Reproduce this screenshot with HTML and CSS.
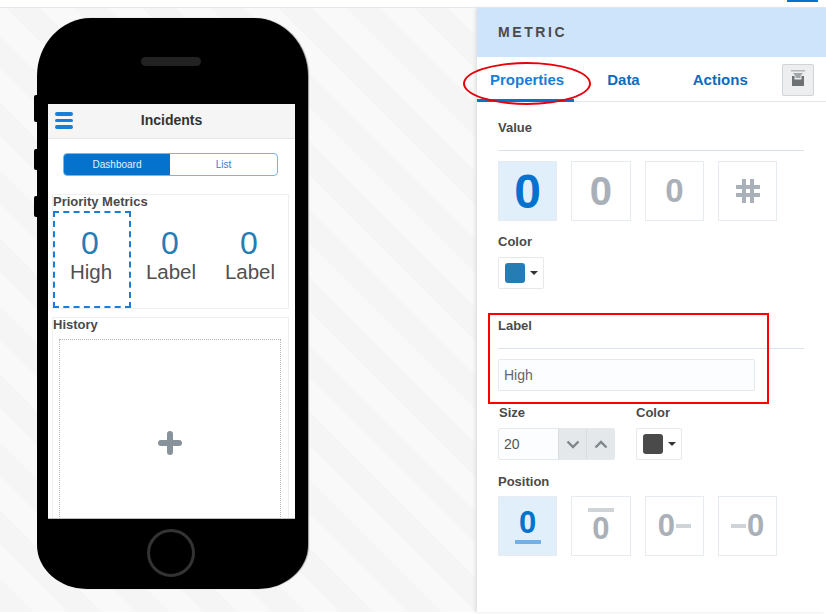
FILE: index.html
```html
<!DOCTYPE html>
<html lang="en">
<head>
    <meta charset="UTF-8">
    <meta name="viewport" content="width=device-width, initial-scale=1.0">
    <title>Metric Properties</title>
    <link rel="stylesheet" href="styles.css">
</head>
<body>
    <header class="topbar">
        <span class="topbar-mark"></span>
    </header>

    <div class="workspace">
        <section class="canvas">
            <div class="phone">
                <span class="side-btn side-btn-1"></span>
                <span class="side-btn side-btn-2"></span>
                <span class="side-btn side-btn-3"></span>
                <div class="speaker"></div>

                <div class="screen">
                    <div class="app-header">
                        <span class="burger"><i></i><i></i><i></i></span>
                        <span class="app-title">Incidents</span>
                    </div>

                    <div class="segmented">
                        <span class="seg seg-on">Dashboard</span>
                        <span class="seg">List</span>
                    </div>

                    <div class="card card-metrics">
                        <h3>Priority Metrics</h3>
                        <div class="metrics">
                            <div class="metric metric-selected"><b>0</b><span>High</span></div>
                            <div class="metric"><b>0</b><span>Label</span></div>
                            <div class="metric"><b>0</b><span>Label</span></div>
                        </div>
                    </div>

                    <div class="card card-history">
                        <h3>History</h3>
                        <div class="dropzone">
                            <svg class="plus" width="24" height="24" viewBox="0 0 24 24">
                                <path d="M12 3v18M3 12h18" stroke="#87929a" stroke-width="6" stroke-linecap="round"/>
                            </svg>
                        </div>
                    </div>
                </div>

                <div class="home-btn"></div>
            </div>
        </section>

        <aside class="panel">
            <div class="panel-head">METRIC</div>

            <nav class="tabs">
                <a class="tab tab-on">Properties</a>
                <a class="tab tab-data">Data</a>
                <a class="tab tab-actions">Actions</a>
                <button class="dock-btn">
                    <svg width="14" height="16" viewBox="0 0 14 16">
                        <path d="M0 0h14v1.500H0z" fill="#b4b7b9"/>
                        <path d="M2 3h10L9.500 6v2h-5V6z" fill="#a2a5a8"/>
                        <path d="M1 6h2.500v3.500h7V6H13v10H1z" fill="#6e7174"/>
                    </svg>
                </button>
            </nav>

            <div class="panel-body">
                <h4 class="section-title">Value</h4>
                <div class="tiles">
                    <div class="tile tile-on"><span class="digit-xl">0</span></div>
                    <div class="tile"><span class="digit-lg">0</span></div>
                    <div class="tile"><span class="digit-md">0</span></div>
                    <div class="tile">
                        <svg width="26" height="26" viewBox="0 0 26 26">
                            <path d="M9 1v24M17 1v24M1 9h24M1 17h24" stroke="#a9b0b8" stroke-width="4"/>
                        </svg>
                    </div>
                </div>

                <div class="field-label field-color">Color</div>
                <div class="swatch-btn"><span class="swatch swatch-blue"></span><span class="caret"></span></div>

                <h4 class="section-title section-label">Label</h4>
                <input class="text-input" type="text" value="High">

                <div class="size-row">
                    <div class="size-col">
                        <div class="field-label">Size</div>
                        <div class="spinner">
                            <span class="spinner-value">20</span>
                            <span class="spinner-btn">
                                <svg width="14" height="9" viewBox="0 0 14 9"><path d="M1.500 1.500 7 7l5.500-5.500" fill="none" stroke="#7d868c" stroke-width="2.400"/></svg>
                            </span>
                            <span class="spinner-btn">
                                <svg width="14" height="9" viewBox="0 0 14 9"><path d="M1.500 7.500 7 2l5.500 5.500" fill="none" stroke="#7d868c" stroke-width="2.400"/></svg>
                            </span>
                        </div>
                    </div>
                    <div class="color-col">
                        <div class="field-label">Color</div>
                        <div class="swatch-btn"><span class="swatch swatch-dark"></span><span class="caret"></span></div>
                    </div>
                </div>

                <div class="field-label field-position">Position</div>
                <div class="tiles">
                    <div class="tile tile-on tile-stack"><span class="digit-pos digit-on">0</span><i class="bar bar-on"></i></div>
                    <div class="tile tile-stack"><i class="bar"></i><span class="digit-pos">0</span></div>
                    <div class="tile tile-side"><span class="digit-pos">0</span><i class="dash"></i></div>
                    <div class="tile tile-side"><i class="dash"></i><span class="digit-pos">0</span></div>
                </div>
            </div>
        </aside>
    </div>

    <div class="mark-ellipse"></div>
    <div class="mark-rect"></div>
</body>
</html>
```

FILE: styles.css
```css
* {
    box-sizing: border-box;
}

body {
    margin: 0;
    width: 826px;
    height: 614px;
    overflow: hidden;
    position: relative;
    background: #fff;
    font-family: 'Liberation Sans', Arial, sans-serif;
    color: #444;
}

.topbar {
    height: 8px;
    border-bottom: 1px solid #e3e8ec;
    position: relative;
}

.topbar-mark {
    position: absolute;
    left: 787px;
    top: 0;
    width: 31px;
    height: 2px;
    background: #0572ce;
}

.workspace {
    display: flex;
    height: 604px;
}

.canvas {
    width: 477px;
    padding: 10px 0 0 37px;
    background: repeating-linear-gradient(45deg, #f5f5f5 0, #f5f5f5 24px, #f9f9f9 24px, #f9f9f9 48px);
}

/* phone */
.phone {
    position: relative;
    width: 271px;
    height: 571px;
    padding: 39px 13px 0 11px;
    background: #000;
    border-radius: 54px 54px 50px 50px / 58px 58px 44px 44px;
    box-shadow: 1px 0 1px #999;
    display: flex;
    flex-direction: column;
}

.side-btn {
    position: absolute;
    left: -3px;
    width: 3px;
    background: #000;
    border-radius: 2px 0 0 2px;
}

.side-btn-1 { top: 77px; height: 27px; }
.side-btn-2 { top: 131px; height: 21px; }
.side-btn-3 { top: 178px; height: 21px; }

.speaker {
    width: 60px;
    height: 9px;
    margin: 0 auto 38px 93px;
    background: #222;
    border-radius: 5px;
}

.screen {
    height: 415px;
    background: #fff;
    overflow: hidden;
    border-bottom: 1px solid #bbb;
}

.app-header {
    position: relative;
    height: 35px;
    background: #f5f5f5;
    border-bottom: 1px solid #e6e6e6;
    display: flex;
    align-items: center;
    justify-content: center;
}

.app-title {
    font-size: 14px;
    font-weight: bold;
    color: #333;
    margin-top: -3px;
}

.burger {
    position: absolute;
    left: 7px;
    top: 8px;
    width: 18px;
    display: flex;
    flex-direction: column;
    gap: 3px;
}

.burger i {
    height: 3.500px;
    background: #1a7dd7;
    border-radius: 2px;
}

.segmented {
    display: flex;
    width: 215px;
    height: 23px;
    margin: 14px 0 18px 15px;
    border: 1px solid #7fb2e6;
    border-radius: 4px;
    overflow: hidden;
}

.seg {
    flex: 1;
    font-size: 10px;
    line-height: 21px;
    text-align: center;
    color: #2f81d0;
}

.seg-on {
    flex: none;
    width: 106px;
    background: #0572ce;
    color: #e6f1fb;
}

.card {
    margin: 0 6px 0 4px;
    border: 1px solid #efefef;
}

.card h3 {
    margin: -1px 0 0;
    font-size: 13px;
    line-height: 15px;
    color: #4a4a4a;
}

.card-metrics {
    height: 115px;
    margin-bottom: 8px;
}

.metrics {
    display: flex;
    height: 97px;
    margin-top: 2px;
}

.metric {
    flex: none;
    width: 78px;
    padding-top: 14px;
    display: flex;
    flex-direction: column;
    align-items: center;
}

.metric + .metric {
    margin-left: 1px;
}

.metric b {
    font-weight: normal;
    font-size: 32px;
    line-height: 36px;
    margin-right: 2px;
    color: #267db3;
}

.metric span {
    font-size: 20.500px;
    line-height: 22px;
    color: #505050;
}

.metric-selected {
    padding: 12px 2px 0 0;
    border: 2px dashed #1a7dd7;
}

.card-history {
    height: 210px;
}

.dropzone {
    height: 200px;
    margin: 7px 7px 0 6px;
    border: 1px dotted #b4b4b4;
    display: flex;
    justify-content: center;
    padding-top: 91px;
}

.home-btn {
    width: 48px;
    height: 48px;
    margin: 10px 0 0 99px;
    border: 3px solid #333;
    border-radius: 50%;
}

/* side panel */
.panel {
    flex: 1;
    background: #fff;
    box-shadow: -2px 0 3px #e2e2e2;
    position: relative;
}

.panel-head {
    height: 49px;
    padding-left: 21px;
    background: #cde4fa;
    font-size: 14px;
    font-weight: bold;
    line-height: 48px;
    letter-spacing: 2.600px;
    color: #4a4a4a;
}

.tabs {
    position: relative;
    height: 45px;
    border-bottom: 1px solid #e0e6ec;
    display: flex;
    align-items: center;
}

.tab {
    font-size: 15px;
    font-weight: bold;
    color: #0b6cbf;
}

.tab-on {
    color: #1a7dd7;
    margin-left: 13px;
}

.tab-on::after {
    content: "";
    position: absolute;
    left: 0;
    bottom: -1px;
    width: 97px;
    height: 3px;
    background: #0572ce;
}

.tab-data { margin-left: 43px; }
.tab-actions { margin-left: 53px; }

.dock-btn {
    margin: 1px 0 0 34px;
    width: 32px;
    height: 32px;
    padding: 0;
    background: #eceef0;
    border: 1px solid #cfd4d8;
    border-radius: 2px;
}

.panel-body {
    padding: 0 22px 0 21px;
}

.section-title {
    margin: 18px 0 10px;
    height: 31px;
    font-size: 13px;
    line-height: 15px;
    border-bottom: 1px solid #dde3ea;
    color: #4a4a4a;
}

.section-label {
    margin-top: 29px;
}

.tiles {
    display: flex;
    gap: 14px;
}

.tile {
    width: 59.330px;
    height: 60px;
    border: 1px solid #e6ebf1;
    display: flex;
    align-items: center;
    justify-content: center;
    font-weight: bold;
    color: #a9b0b8;
}

.tile-on {
    background: #e1effa;
}

.digit-xl { font-size: 48px; color: #0572ce; }
.digit-lg { font-size: 40px; }
.digit-md { font-size: 33px; }

.field-label {
    font-size: 13px;
    font-weight: bold;
    line-height: 15px;
    color: #4a4a4a;
}

.field-color {
    margin: 13px 0 8px;
}

.swatch-btn {
    width: 46px;
    height: 32px;
    border: 1px solid #e6e9ec;
    border-radius: 2px;
    display: flex;
    align-items: center;
    padding-left: 6px;
    gap: 5px;
    background: #fff;
}

.swatch {
    width: 20px;
    height: 20px;
    border-radius: 3px;
}

.swatch-blue { background: #267db3; }
.swatch-dark { background: #4a4a4a; }

.caret {
    width: 0;
    height: 0;
    border-left: 4px solid transparent;
    border-right: 4px solid transparent;
    border-top: 4px solid #333;
}

.text-input {
    display: block;
    width: 257px;
    height: 32px;
    padding: 0 5px;
    background: #fcfdfe;
    border: 1px solid #e6e9ec;
    border-radius: 2px;
    font: 14px 'Liberation Sans', Arial, sans-serif;
    color: #666;
}

.size-row {
    display: flex;
    margin-top: 14px;
    padding-left: 1px;
}

.size-row .field-label {
    margin-bottom: 8px;
}

.size-col {
    width: 137px;
}

.spinner {
    display: flex;
    width: 117px;
    height: 32px;
    margin-left: -1px;
    border: 1px solid #e6e9ec;
    border-radius: 2px;
    background: #fcfdfe;
}

.spinner-value {
    flex: 1;
    padding-left: 5px;
    font-size: 14px;
    line-height: 30px;
    color: #555;
}

.spinner-btn {
    width: 28px;
    background: #e4e8ea;
    border-left: 1px solid #d8dcdf;
    display: flex;
    align-items: center;
    justify-content: center;
}

.field-position {
    margin: 14px 0 7px;
}

.tile-stack {
    flex-direction: column;
}

.digit-pos {
    font-size: 31px;
    line-height: 30px;
}

.digit-on {
    color: #0572ce;
}

.bar {
    width: 26px;
    height: 4px;
    background: #cfd4d9;
    margin-bottom: 2px;
}

.bar-on {
    background: #6fb1e8;
    margin: 2px 0 0;
}

.tile-side {
    gap: 1px;
}

.dash {
    width: 15px;
    height: 4px;
    background: #cfd4d9;
}

/* review annotations */
.mark-ellipse {
    position: absolute;
    left: 463px;
    top: 62px;
    width: 128px;
    height: 43px;
    border: 2px solid #e8000b;
    border-radius: 50%;
}

.mark-rect {
    position: absolute;
    left: 488px;
    top: 313px;
    width: 281px;
    height: 91px;
    border: 2px solid #f00;
}
```
